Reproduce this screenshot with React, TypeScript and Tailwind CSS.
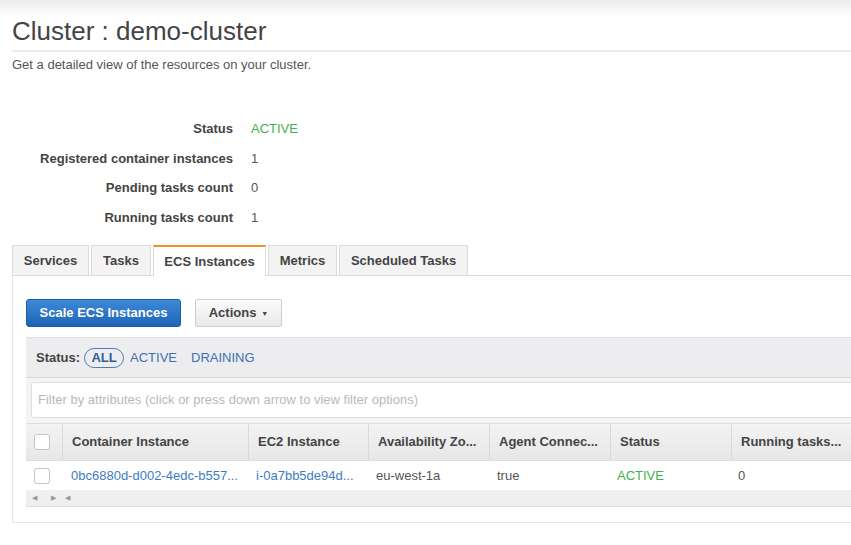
import React from "react";

const stats = [
  { label: "Status", value: "ACTIVE", green: true },
  { label: "Registered container instances", value: "1" },
  { label: "Pending tasks count", value: "0" },
  { label: "Running tasks count", value: "1" },
];

const tabs = [
  { name: "Services", w: "w-[77px]" },
  { name: "Tasks", w: "w-[60px]" },
  { name: "ECS Instances", w: "w-[113px]", active: true },
  { name: "Metrics", w: "w-[69px]" },
  { name: "Scheduled Tasks", w: "w-[129px]" },
];

const headers = [
  "Container Instance",
  "EC2 Instance",
  "Availability Zo...",
  "Agent Connec...",
  "Status",
  "Running tasks...",
];

const Checkbox = () => (
  <div className="ml-[8px] w-[16px] h-[16px] rounded-[3px] border border-[#c4c4c4] bg-white" />
);

const App = () => {
  return (
    <div className="w-[851px] h-[545px] overflow-hidden bg-white font-['Liberation_Sans',Arial,sans-serif] text-[#444]">
      <div className="h-[17px] bg-gradient-to-b from-[#ececec] to-white" />

      <div className="pl-[12px]">
        <h1 className="text-[26px] leading-[28px] text-[#444]">
          Cluster : demo-cluster
        </h1>
        <div className="mt-[5px] h-[2px] bg-[#ebebeb]" />
        <p className="mt-[5px] text-[13px] leading-[16px] text-[#555]">
          Get a detailed view of the resources on your cluster.
        </p>

        {/* Cluster summary */}
        <div className="mt-[41px] grid grid-cols-[221px_auto] gap-x-[18px] text-[13px] leading-[29.5px]">
          {stats.map((s) => (
            <React.Fragment key={s.label}>
              <div className="text-right font-bold text-[#444]">{s.label}</div>
              <div className={s.green ? "text-[#3fb24c]" : "text-[#555]"}>
                {s.value}
              </div>
            </React.Fragment>
          ))}
        </div>

        {/* Tabs */}
        <div className="mt-[13px] flex gap-[2px] border-b border-[#dcdcdc] h-[31px]">
          {tabs.map((t) =>
            t.active ? (
              <div
                key={t.name}
                className={`${t.w} h-[31px] flex items-center justify-center bg-white border-x border-[#dcdcdc] border-t-2 border-t-[#ec912e] text-[13px] font-bold text-[#444]`}
              >
                {t.name}
              </div>
            ) : (
              <div
                key={t.name}
                className={`${t.w} h-[30px] flex items-center justify-center bg-[#f3f3f3] border-x border-t border-[#dcdcdc] text-[13px] font-bold text-[#444]`}
              >
                {t.name}
              </div>
            )
          )}
        </div>

        {/* Panel */}
        <div className="w-[860px] border-l border-b border-[#e6e6e6] pl-[13px] pt-[23px] pb-[15px]">
          <div className="flex gap-[14px] h-[28px]">
            <button className="w-[155px] h-[28px] rounded-[3px] border border-[#1b5ea8] bg-gradient-to-b from-[#3c8ad8] to-[#1f65b5] text-white text-[13px] font-bold">
              Scale ECS Instances
            </button>
            <button className="w-[87px] h-[28px] rounded-[2px] border border-[#cfcfcf] bg-gradient-to-b from-[#fbfbfb] to-[#e9e9e9] text-[13px] font-bold text-[#444] flex items-center justify-center gap-[5px]">
              Actions
              <span className="text-[7px] leading-none">▼</span>
            </button>
          </div>

          <div className="mt-[10px] border-t border-[#e2e2e2] bg-[#ededef]">
            <div className="h-[40px] flex items-center pl-[10px] text-[13px] border-b border-[#d9d9d9]">
              <span className="font-bold text-[#444]">Status:</span>
              <span className="ml-[4px] w-[40px] h-[20px] rounded-full border-[1.5px] border-[#4a7fbb] flex items-center justify-center font-bold text-[#2f5f99]">
                ALL
              </span>
              <span className="ml-[6px] text-[#3d70b2]">ACTIVE</span>
              <span className="ml-[14px] text-[#3d70b2]">DRAINING</span>
            </div>
            <div className="bg-[#f4f4f4] pl-[5px] pt-[4px] pb-[5px]">
              <div className="h-[36px] rounded-[3px] border border-[#dedede] bg-white flex items-center pl-[6px] text-[13px] text-[#b9b9b9]">
                Filter by attributes (click or press down arrow to view filter options)
              </div>
            </div>
          </div>

          {/* Table */}
          <div className="grid grid-cols-[36px_186px_120px_121px_121px_121px_120px] h-[38px] bg-gradient-to-b from-[#f3f3f3] to-[#e7e7e7] border-y border-[#dddddd] text-[13px] font-bold text-[#444]">
            <div className="flex items-center">
              <Checkbox />
            </div>
            {headers.map((h) => (
              <div key={h} className="flex items-center pl-[9px] border-l border-[#d9d9d9] whitespace-nowrap overflow-hidden">
                {h}
              </div>
            ))}
          </div>
          <div className="grid grid-cols-[36px_186px_120px_121px_121px_121px_120px] h-[29px] bg-white text-[13px] text-[#555]">
            <div className="flex items-center">
              <Checkbox />
            </div>
            <div className="flex items-center pl-[9px] text-[#3d7cc4] whitespace-nowrap overflow-hidden">0bc6880d-d002-4edc-b557...</div>
            <div className="flex items-center pl-[8px] text-[#3d7cc4] whitespace-nowrap overflow-hidden">i-0a7bb5de94d...</div>
            <div className="flex items-center pl-[8px]">eu-west-1a</div>
            <div className="flex items-center pl-[8px]">true</div>
            <div className="flex items-center pl-[7px] text-[#3fb24c]">ACTIVE</div>
            <div className="flex items-center pl-[7px]">0</div>
          </div>
          <div className="h-[17px] bg-[#efefef] border-b border-[#dddddd] flex items-center text-[7px] text-[#999]">
            <span className="ml-[6px]">◀</span>
            <span className="ml-[14px]">▶</span>
            <span className="ml-[9px]">◀</span>
          </div>
        </div>
      </div>
    </div>
  );
};

export default App;
